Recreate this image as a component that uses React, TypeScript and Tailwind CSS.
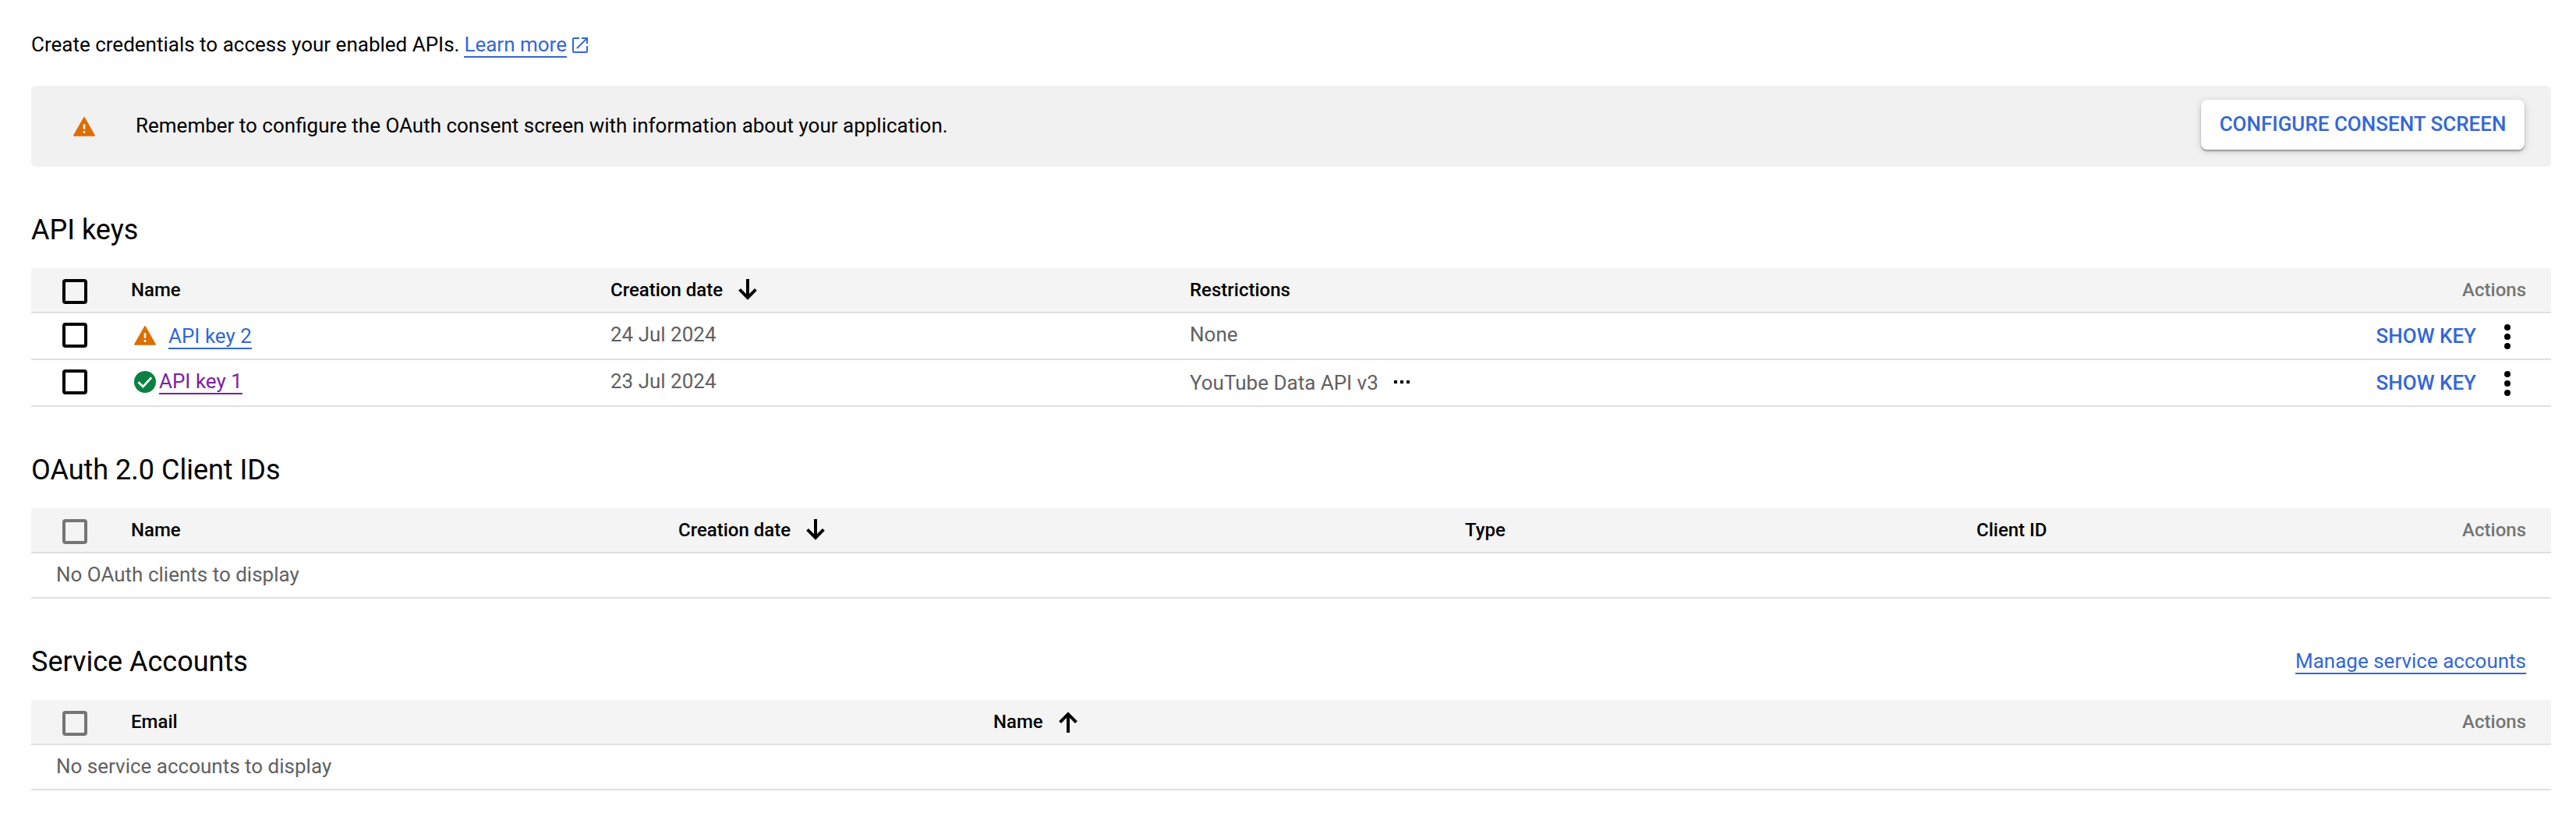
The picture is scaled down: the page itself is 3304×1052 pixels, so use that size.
import React from "react";

function Warning({ className = "" }: { className?: string }) {
  return (
    <svg className={className} width="28" height="25" viewBox="0 0 28 25" fill="#df6c00">
      <path fillRule="evenodd" d="M13.2.6a1 1 0 0 1 1.6 0L27.7 23.2a1 1 0 0 1-.8 1.6H1.1a1 1 0 0 1-.8-1.6ZM12.7 9.3v6.4h2.6V9.3Zm0 8.6v2.8h2.6v-2.8Z" />
    </svg>
  );
}

function Check() {
  return (
    <svg width="28" height="28" viewBox="0 0 28 28">
      <circle cx="14" cy="14" r="14" fill="#0b8043" />
      <path d="m5.4 14.3 6 5.8L22.2 8.4" fill="none" stroke="#fff" strokeWidth="2.8" />
    </svg>
  );
}

function Arrow({ up = false }: { up?: boolean }) {
  return (
    <svg className={up ? "rotate-180" : ""} width="24" height="28" viewBox="0 0 24 28" fill="none" stroke="#000" strokeWidth="4">
      <path d="M12 0v24M1.6 13.4 12 23.9l10.4-10.5" />
    </svg>
  );
}

function External() {
  return (
    <svg width="20" height="20" viewBox="0 0 20 20" fill="none" stroke="#3367d6" strokeWidth="2">
      <path d="M9 1H2.2C1.5 1 1 1.5 1 2.200v15.600c0 .7.5 1.200 1.200 1.200h15.600c.7 0 1.200-.5 1.200-1.200V11M12 1h7v7M18.600 1.400 6 14" />
    </svg>
  );
}

function Kebab() {
  return (
    <svg width="8" height="32" viewBox="0 0 8 32">
      <circle cx="4" cy="4" r="4" />
      <circle cx="4" cy="16" r="4" />
      <circle cx="4" cy="28" r="4" />
    </svg>
  );
}

function Box({ muted = false }: { muted?: boolean }) {
  return (
    <div className="w-32 shrink-0 pl-10">
      <div className={"size-8 rounded-[4px] border-4 " + (muted ? "border-[#757575]" : "border-black")} />
    </div>
  );
}

function Head({ muted, children }: { muted?: boolean; children: React.ReactNode }) {
  return (
    <div className="flex h-[58px] border-b-2 border-[#e0e0e0] bg-[#f4f4f4] text-[24px] leading-[56px] font-medium">
      <div className="pt-3.5">
        <Box muted={muted} />
      </div>
      {children}
      <div className="ml-auto pr-8 text-[#757575]">Actions</div>
    </div>
  );
}

function Empty({ children }: { children: React.ReactNode }) {
  return <div className="h-[58px] border-b-2 border-[#e0e0e0] pl-8 text-[26px] leading-[54px] text-[#616161]">{children}</div>;
}

function ShowKey() {
  return (
    <div className="ml-auto flex items-start pr-[52px]">
      <button className="mr-9 text-[26px] leading-[58px] font-medium text-[#3367d6]">SHOW KEY</button>
      <div className="pt-3.5">
        <Kebab />
      </div>
    </div>
  );
}

const row = "flex h-[60px] border-b-2 border-[#e0e0e0] text-[26px] leading-[54px] text-[#616161]";
const link = "h-[34px] border-b-2 leading-[34px]";
const h2 = "text-[36px] leading-[44px]";

export default function App() {
  return (
    <main className="h-[1052px] w-[3304px] overflow-hidden bg-white pt-10 pr-8 pl-10 font-['Roboto',sans-serif] text-black">
      <div className="flex h-[70px] text-[26px] leading-[34px]">
        <span>Create credentials to access your enabled APIs.</span>
        <a className={link + " ml-1.5 border-[#3367d6] text-[#3367d6]"}>Learn more</a>
        <span className="mt-2 ml-[7px]">
          <External />
        </span>
      </div>

      <div className="flex h-[104px] items-start rounded-[6px] bg-[#f1f1f1] pr-[34px] pl-[54px]">
        <Warning className="mt-10" />
        <span className="ml-[52px] text-[26px] leading-[102px]">
          Remember to configure the OAuth consent screen with information about your application.
        </span>
        <button className="mt-[18px] ml-auto h-16 w-[415px] rounded-[8px] bg-white pb-0.5 text-[26px] leading-[60px] font-medium text-[#3367d6] shadow-[0_2px_2px_rgba(0,0,0,0.3),0_2px_10px_rgba(0,0,0,0.18)]">
          CONFIGURE CONSENT SCREEN
        </button>
      </div>

      <h2 className={h2 + " mt-[59px] mb-[27px]"}>API keys</h2>
      <Head>
        <div className="w-[615px]">Name</div>
        <div className="w-[164px]">Creation date</div>
        <div className="w-[579px] pt-3.5">
          <Arrow />
        </div>
        <div>Restrictions</div>
      </Head>
      <div className={row}>
        <div className="pt-3">
          <Box />
        </div>
        <div className="flex w-[615px] pl-1">
          <Warning className="mt-4" />
          <a className={link + " mt-3 ml-4 border-[#3367d6] text-[#3367d6]"}>API key 2</a>
        </div>
        <div className="w-[743px]">24 Jul 2024</div>
        <div>None</div>
        <ShowKey />
      </div>
      <div className={row}>
        <div className="pt-3">
          <Box />
        </div>
        <div className="flex w-[615px] pl-1">
          <div className="pt-3.5">
            <Check />
          </div>
          <a className={link + " mt-2.5 ml-1 border-[#7b1fa2] text-[#7b1fa2]"}>API key 1</a>
        </div>
        <div className="w-[743px]">23 Jul 2024</div>
        <div className="flex leading-[58px]">
          YouTube Data API v3
          <span className="mt-[26px] ml-5 flex gap-1">
            <i className="size-1 bg-black" />
            <i className="size-1 bg-black" />
            <i className="size-1 bg-black" />
          </span>
        </div>
        <ShowKey />
      </div>

      <h2 className={h2 + " mt-[59px] mb-[27px]"}>OAuth 2.0 Client IDs</h2>
      <Head muted>
        <div className="w-[702px]">Name</div>
        <div className="w-[164px]">Creation date</div>
        <div className="w-[845px] pt-3.5">
          <Arrow />
        </div>
        <div className="w-[656px]">Type</div>
        <div>Client ID</div>
      </Head>
      <Empty>No OAuth clients to display</Empty>

      <div className="mt-[59px] mb-[27px] flex justify-between pr-8">
        <h2 className={h2}>Service Accounts</h2>
        <a className={link + " mt-1 border-[#3367d6] text-[26px] text-[#3367d6]"}>Manage service accounts</a>
      </div>
      <Head muted>
        <div className="w-[1106px]">Email</div>
        <div className="w-[84px]">Name</div>
        <div className="pt-3.5">
          <Arrow up />
        </div>
      </Head>
      <Empty>No service accounts to display</Empty>
    </main>
  );
}
